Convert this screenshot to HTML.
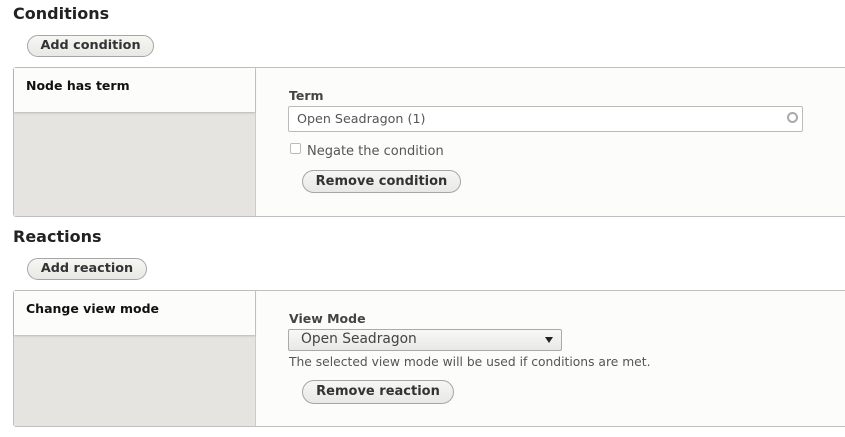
<!DOCTYPE html>
<html><head><style>
body{margin:0;width:845px;height:437px;background:#fff;font-family:"DejaVu Sans","Liberation Sans",sans-serif;color:#333;position:relative;overflow:hidden}
.a{position:absolute}
h2{position:absolute;margin:0;font-size:16px;font-weight:bold;color:#222;left:13px}
.btn{position:absolute;box-sizing:border-box;border:1px solid #a6a6a6;border-radius:12px;background:linear-gradient(#f6f6f3,#e8e8e4);font-size:12.8px;font-weight:bold;color:#333;text-align:center;line-height:20px}
.box{position:absolute;left:13px;width:850px;box-sizing:border-box;border:1px solid #bfbfbf;border-radius:3px;background:#fcfcfa}
.side{position:absolute;left:0;top:0;width:241px;bottom:0;background:#e5e4e0;border-right:1px solid #ccc}
.tab{position:absolute;left:0;top:0;width:241px;height:44px;background:#fcfcfa;box-shadow:0 1px 2px rgba(0,0,0,.2);font-size:12.5px;font-weight:bold;color:#111;padding:10px 0 0 12px;box-sizing:border-box}
.lbl{position:absolute;font-size:12.5px;font-weight:bold;color:#444}
.t{position:absolute;font-size:12.7px;color:#555}
</style></head><body>
<h2 style="top:4px">Conditions</h2>
<div class="btn" style="left:27px;top:35px;width:127px;height:22px">Add condition</div>
<div class="box" style="top:67px;height:150px">
 <div class="side"><div class="tab">Node has term</div></div>
</div>
<div class="lbl" style="left:289px;top:88px">Term</div>
<div class="a" style="left:288px;top:106px;width:515px;height:26px;box-sizing:border-box;border:1px solid #bbb;border-radius:2px;background:#fff"></div>
<div class="t" style="left:297px;top:111px">Open Seadragon (1)</div>
<div class="a" style="left:787px;top:112px;width:11px;height:11px;border:2px solid #aaa;border-radius:50%;box-sizing:border-box"></div>
<div class="a" style="left:290px;top:143px;width:11px;height:11px;border:1px solid #bbb;border-radius:2px;box-sizing:border-box;background:#fff"></div>
<div class="t" style="left:307px;top:144px;font-size:13px">Negate the condition</div>
<div class="btn" style="left:302px;top:170px;width:159px;height:23px;line-height:21px;font-size:13px">Remove condition</div>

<h2 style="top:227px">Reactions</h2>
<div class="btn" style="left:27px;top:258px;width:120px;height:22px">Add reaction</div>
<div class="box" style="top:290px;height:137px">
 <div class="side"><div class="tab">Change view mode</div></div>
</div>
<div class="lbl" style="left:289px;top:311px">View Mode</div>
<div class="a" style="left:288px;top:329px;width:274px;height:22px;box-sizing:border-box;border:1px solid #aaa;border-radius:2px;background:linear-gradient(#f8f8f6,#e8e8e4)"></div>
<div class="a" style="left:301px;top:331px;font-size:13.8px;color:#444">Open Seadragon</div>
<div class="a" style="left:545px;top:337px;width:0;height:0;border-left:4.5px solid transparent;border-right:4.5px solid transparent;border-top:6px solid #222"></div>
<div class="t" style="left:289px;top:355px;font-size:12.3px">The selected view mode will be used if conditions are met.</div>
<div class="btn" style="left:302px;top:380px;width:152px;height:24px;line-height:21px;font-size:13px">Remove reaction</div>
</body></html>
